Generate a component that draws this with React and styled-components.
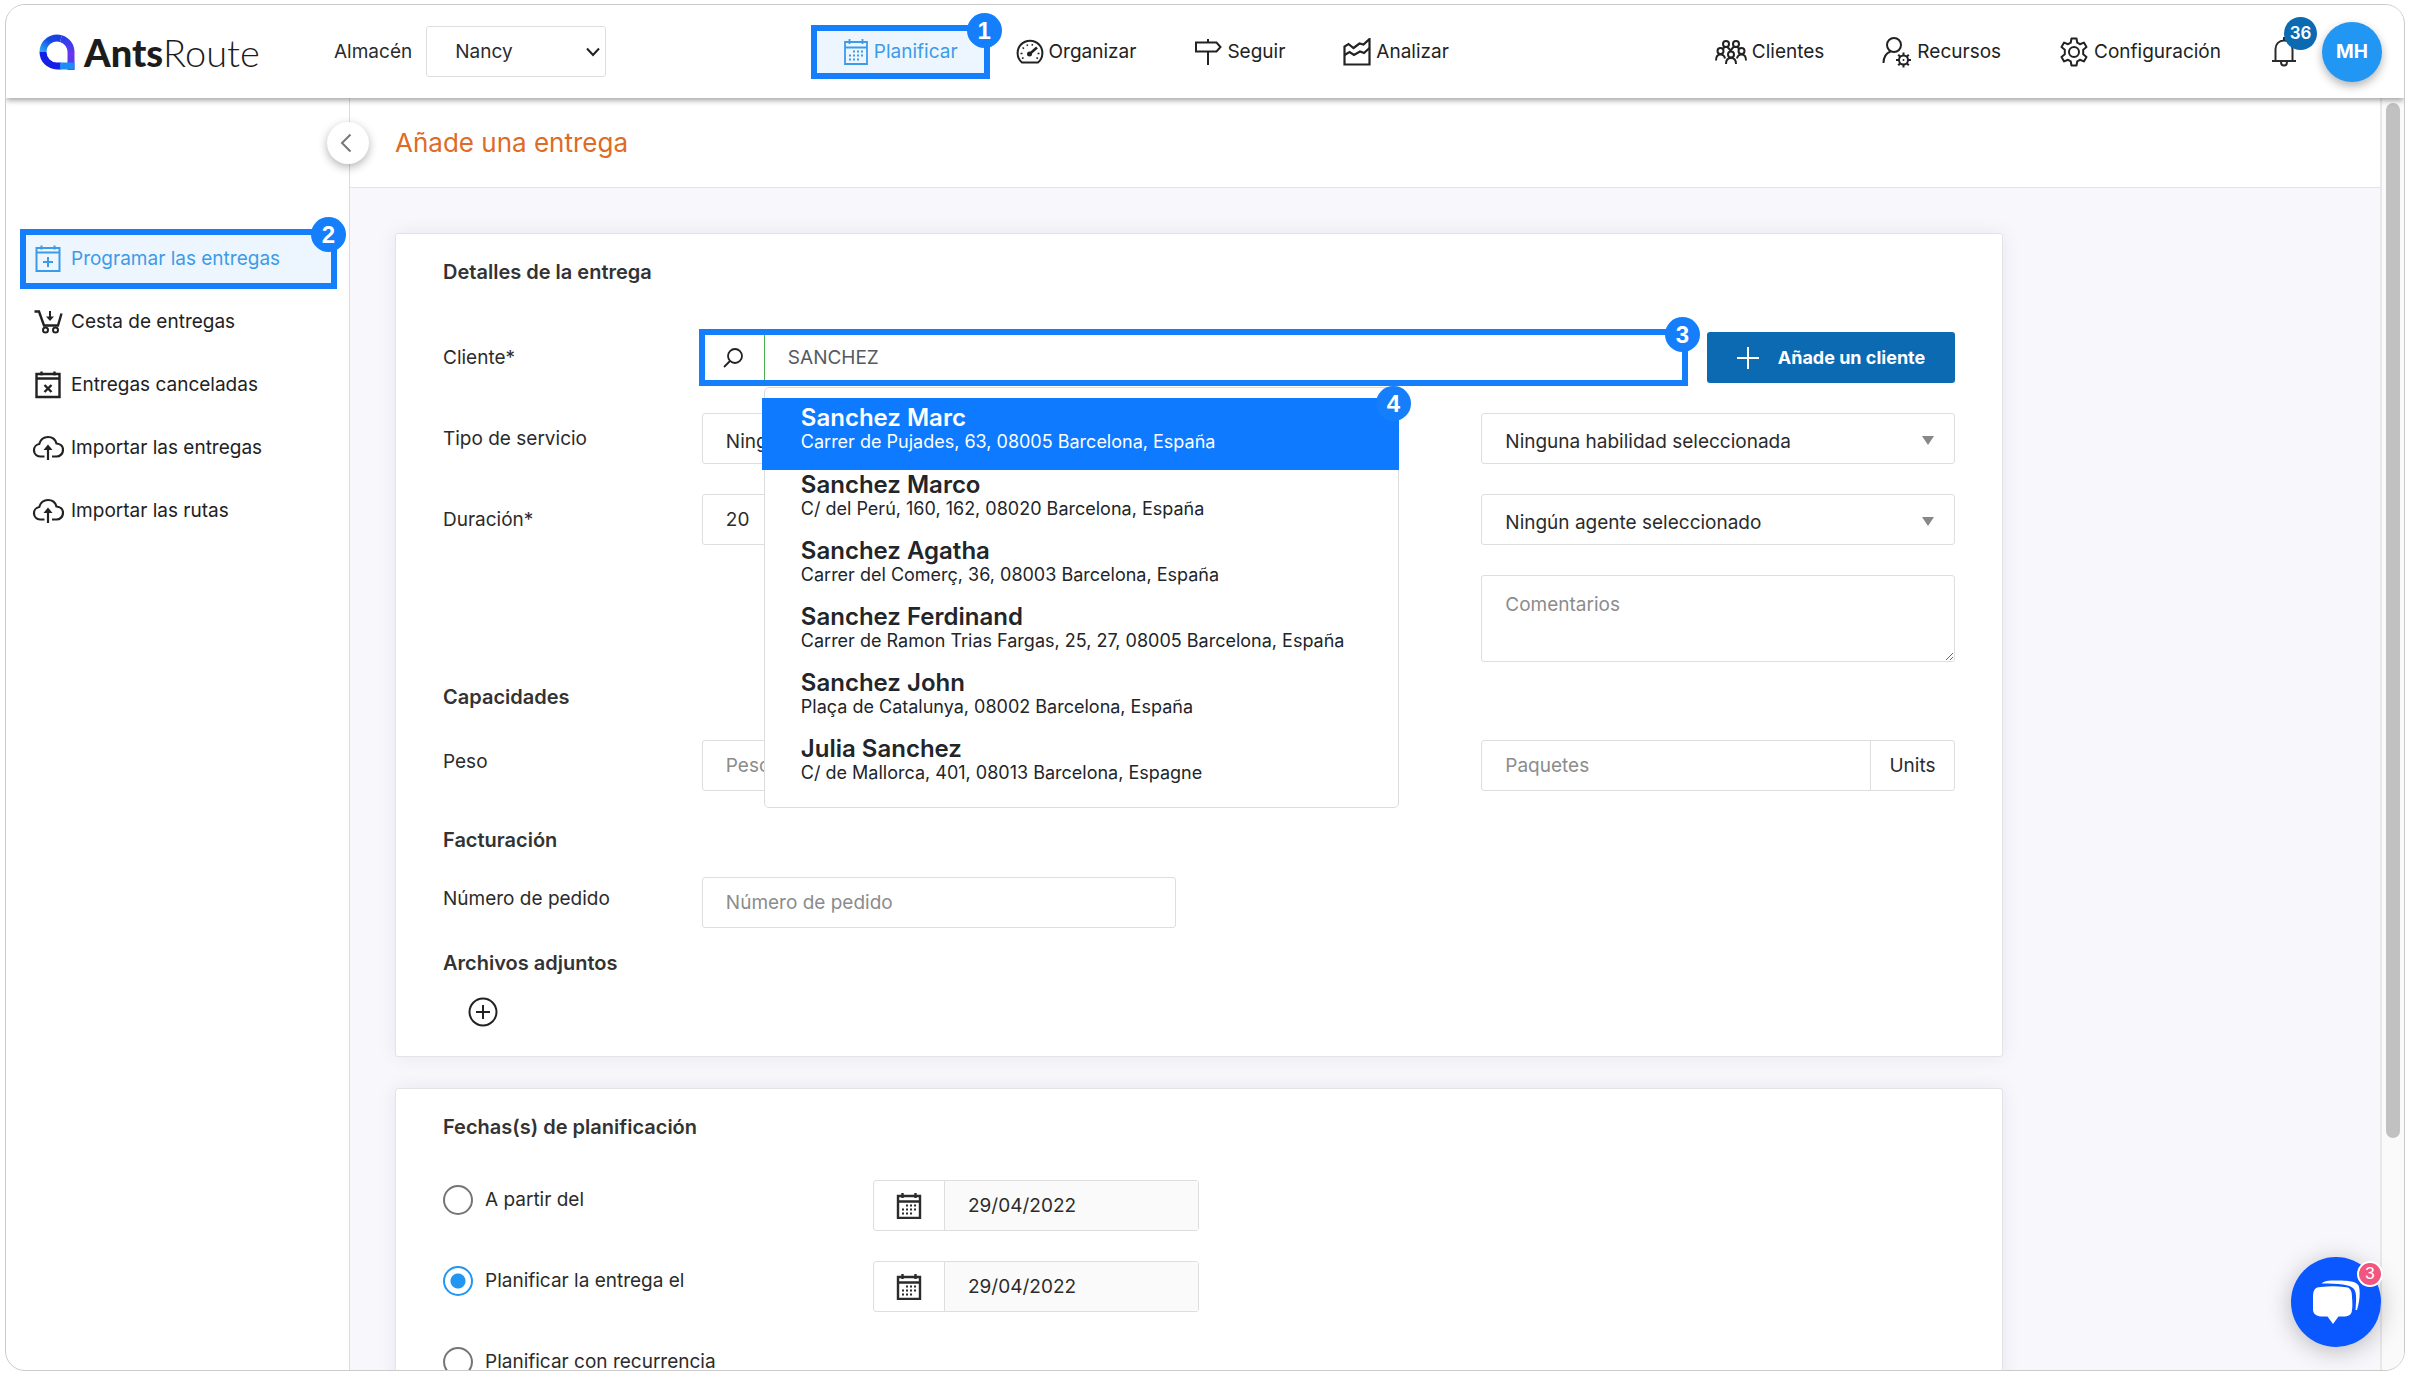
import styled, { createGlobalStyle, css } from "styled-components";

const clients = [
  { name: "Sanchez Marc", address: "Carrer de Pujades, 63, 08005 Barcelona, España" },
  { name: "Sanchez Marco", address: "C/ del Perú, 160, 162, 08020 Barcelona, España" },
  { name: "Sanchez Agatha", address: "Carrer del Comerç, 36, 08003 Barcelona, España" },
  { name: "Sanchez Ferdinand", address: "Carrer de Ramon Trias Fargas, 25, 27, 08005 Barcelona, España" },
  { name: "Sanchez John", address: "Plaça de Catalunya, 08002 Barcelona, España" },
  { name: "Julia Sanchez", address: "C/ de Mallorca, 401, 08013 Barcelona, Espagne" },
];

export default function App() {
  return (
    <>
      <GlobalStyle />
      <Frame>
        <Header>
          <Brand>
            <Logo href="#">
              <LogoMark />
              <LogoName>
                <b>Ants</b>Route
              </LogoName>
            </Logo>
            <label htmlFor="warehouse">Almacén</label>
            <Warehouse>
              <select id="warehouse" defaultValue="Nancy">
                <option>Nancy</option>
              </select>
              <ChevronIcon />
            </Warehouse>
          </Brand>
          <Nav>
            <NavLink href="#" $active>
              <CalendarIcon size={26} />
              Planificar
              <Step>1</Step>
            </NavLink>
            <NavLink href="#">
              <GaugeIcon />
              Organizar
            </NavLink>
            <NavLink href="#">
              <SignIcon />
              Seguir
            </NavLink>
            <NavLink href="#">
              <ChartIcon />
              Analizar
            </NavLink>
          </Nav>
          <Nav>
            <NavLink href="#">
              <PeopleIcon />
              Clientes
            </NavLink>
            <NavLink href="#">
              <ResourceIcon />
              Recursos
            </NavLink>
            <NavLink href="#">
              <GearIcon />
              Configuración
            </NavLink>
            <Bell aria-label="Notificaciones">
              <BellIcon />
              <BellCount>36</BellCount>
            </Bell>
            <Avatar>MH</Avatar>
          </Nav>
        </Header>

        <Body>
          <Sidebar>
            <SideLink href="#" $active>
              <CalendarMarkIcon d="M16 11.5v10M11 16.5h10" />
              Programar las entregas
              <Step>2</Step>
            </SideLink>
            <SideLink href="#">
              <CartIcon />
              Cesta de entregas
            </SideLink>
            <SideLink href="#">
              <CalendarMarkIcon dark d="M12.500 13.500l7 7M19.500 13.500l-7 7" />
              Entregas canceladas
            </SideLink>
            <SideLink href="#">
              <CloudIcon />
              Importar las entregas
            </SideLink>
            <SideLink href="#">
              <CloudIcon />
              Importar las rutas
            </SideLink>
          </Sidebar>
          <Collapse aria-label="Plegar el menú">
            <svg width="12" height="20" viewBox="0 0 12 20">
              <path d="M10.500 1.500L2 10l8.500 8.500" fill="none" stroke="#777" strokeWidth="2" />
            </svg>
          </Collapse>

          <Main>
            <TitleBar>
              <h1>Añade una entrega</h1>
            </TitleBar>
            <Cards>
              <Card>
                <Heading $after={48}>Detalles de la entrega</Heading>
                <Row>
                  <Label htmlFor="client">Cliente*</Label>
                  <ClientCell>
                    <Search>
                      <SearchIcon />
                      <input id="client" defaultValue="SANCHEZ" />
                      <Step>3</Step>
                      <Results>
                        {clients.map((client, i) => (
                          <Result key={client.name} $active={i === 0}>
                            <strong>{client.name}</strong>
                            <span>{client.address}</span>
                            {i === 0 && <Step>4</Step>}
                          </Result>
                        ))}
                      </Results>
                    </Search>
                    <AddClient>
                      <svg width="22" height="22" viewBox="0 0 22 22">
                        <path d="M11 0v22M0 11h22" stroke="#fff" strokeWidth="2" />
                      </svg>
                      Añade un cliente
                    </AddClient>
                  </ClientCell>
                </Row>
                <Row>
                  <Label htmlFor="service">Tipo de servicio</Label>
                  <Picker id="service" value="Ninguno" />
                  <Last>
                    <Picker label="Habilidad" value="Ninguna habilidad seleccionada" />
                  </Last>
                </Row>
                <Row>
                  <Label htmlFor="duration">Duración*</Label>
                  <Input id="duration" defaultValue="20" />
                  <Last>
                    <Picker label="Agente" value="Ningún agente seleccionado" />
                  </Last>
                </Row>
                <Row>
                  <Last>
                    <Comments aria-label="Comentarios" placeholder="Comentarios" />
                  </Last>
                </Row>

                <Heading $before={23} $after={31}>Capacidades</Heading>
                <Row>
                  <Label htmlFor="weight" $raised>Peso</Label>
                  <Input id="weight" placeholder="Peso" />
                  <Last>
                    <UnitField>
                      <input aria-label="Paquetes" placeholder="Paquetes" />
                      <span>Units</span>
                    </UnitField>
                  </Last>
                </Row>

                <Heading $before={37} $after={25}>Facturación</Heading>
                <Row>
                  <Label htmlFor="order" $raised>Número de pedido</Label>
                  <Input id="order" placeholder="Número de pedido" />
                </Row>

                <Heading $before={23} $after={22}>Archivos adjuntos</Heading>
                <Attach aria-label="Adjuntar un archivo">
                  <svg width="30" height="30" viewBox="0 0 30 30" fill="none" stroke="#222" strokeWidth="2">
                    <circle cx="15" cy="15" r="13.500" />
                    <path d="M15 8v14M8 15h14" />
                  </svg>
                </Attach>
              </Card>

              <Card>
                <Heading $after={41}>Fechas(s) de planificación</Heading>
                <DateRow>
                  <Choice>
                    <input type="radio" name="plan" />
                    A partir del
                  </Choice>
                  <DateField label="A partir del" />
                </DateRow>
                <DateRow>
                  <Choice>
                    <input type="radio" name="plan" defaultChecked />
                    Planificar la entrega el
                  </Choice>
                  <DateField label="Planificar la entrega el" />
                </DateRow>
                <DateRow>
                  <Choice>
                    <input type="radio" name="plan" />
                    Planificar con recurrencia
                  </Choice>
                </DateRow>
              </Card>
            </Cards>
          </Main>
          <Scrollbar>
            <div />
          </Scrollbar>
        </Body>

        <Chat aria-label="Chat">
          <ChatIcon />
          <ChatCount>3</ChatCount>
        </Chat>
      </Frame>
    </>
  );
}

function Picker({ id, label, value }) {
  return (
    <PickerBox>
      <select id={id} aria-label={label} defaultValue={value}>
        <option>{value}</option>
      </select>
      <svg width="12" height="9" viewBox="0 0 12 9">
        <path d="M0 0h12L6 9z" fill="#888" />
      </svg>
    </PickerBox>
  );
}

function DateField({ label }) {
  return (
    <DateBox>
      <span>
        <CalendarIcon size={26} bold />
      </span>
      <input aria-label={label} defaultValue="29/04/2022" />
    </DateBox>
  );
}

function LogoMark() {
  return (
    <svg width="36" height="36" viewBox="0 0 36 36" fill="none" strokeWidth="7">
      <defs>
        <linearGradient id="logoTop" x1="0" y1="1" x2="1" y2="0">
          <stop offset="0" stopColor="#2aa5f5" />
          <stop offset="0.6" stopColor="#1549e0" />
          <stop offset="1" stopColor="#1b3fe0" />
        </linearGradient>
        <linearGradient id="logoRight" x1="0" y1="0" x2="0" y2="1">
          <stop offset="0" stopColor="#2a3fe8" />
          <stop offset="0.5" stopColor="#6a35ee" />
          <stop offset="1" stopColor="#4a3cf0" />
        </linearGradient>
      </defs>
      <path d="M4 18A14 14 0 0 1 22 4.600" stroke="url(#logoTop)" />
      <path d="M22 4.600A14 14 0 0 1 32 18V36" stroke="url(#logoRight)" />
      <path d="M4 18A14 14 0 0 0 18 32H22" stroke="#1420e6" />
      <path d="M21 32H35.500" stroke="#1f8cf5" />
    </svg>
  );
}

function ChevronIcon() {
  return (
    <svg width="14" height="10" viewBox="0 0 14 10" fill="none">
      <path d="M1 1.500l6 6.500 6-6.500" stroke="#222" strokeWidth="2" />
    </svg>
  );
}

function CalendarIcon({ size, bold }) {
  return (
    <svg width={size} height={size} viewBox="0 0 26 26" fill="none" stroke="currentColor" strokeWidth={bold ? 2.4 : 1.8}>
      <path d="M2 3h22v22H2zM2 8.500h22M6.500 0v5M19.500 0v5" />
      <path d="M10 12.500h12M6 16.500h16M6 20.500h12" strokeWidth="2" strokeDasharray="2 2" />
    </svg>
  );
}

function CalendarMarkIcon({ d, dark }) {
  return (
    <svg width="32" height="30" viewBox="0 0 32 30" fill="none" stroke="currentColor" strokeWidth={dark ? 2.4 : 2}>
      <path d="M4.500 4h23v23h-23zM4.500 8.500h23M9.500 1.500v4M22.500 1.500v4" />
      <g transform="translate(0 1.500)">
        <path d={d} />
      </g>
    </svg>
  );
}

function GaugeIcon() {
  return (
    <svg width="28" height="26" viewBox="0 0 28 26" fill="none" stroke="currentColor" strokeWidth="2">
      <path d="M6 23.500A12.400 12.400 0 1 1 22 23.500z" strokeLinejoin="round" />
      <path d="M13 15.500l8-7" strokeWidth="2.500" />
      <circle cx="13.500" cy="15" r="1.500" fill="currentColor" />
      <path d="M4.500 14.500h2M6.500 8.500l1.500 1.200M11 5.500l.6 1.600M16.500 5l-.4 1.700M23.500 14.500h-2M6 19.500l1.600-.8M22 19.500l-1.600-.8" strokeWidth="1.500" />
    </svg>
  );
}

function SignIcon() {
  return (
    <svg width="28" height="26" viewBox="0 0 28 26" fill="none" stroke="currentColor" strokeWidth="2">
      <path d="M2 3.500h20.500l4 4.500-4 4.500H2zM14 0v3.500M14 12.500V26" />
    </svg>
  );
}

function ChartIcon() {
  return (
    <svg width="28" height="28" viewBox="0 0 28 28" fill="none" stroke="currentColor" strokeWidth="2.200">
      <path d="M1.500 26.500v-18L5.500 6l5 4 6-4.500 4 1 6-5.500v25.500z" />
      <path d="M1.500 17l5-3 4.500 3 6-3.500 4 1.500 5.500-5" />
    </svg>
  );
}

function PeopleIcon() {
  return (
    <svg width="32" height="26" viewBox="0 0 32 26" fill="none" stroke="currentColor" strokeWidth="2">
      <circle cx="11" cy="5" r="3" />
      <circle cx="21" cy="5" r="3" />
      <circle cx="5.500" cy="12" r="3" />
      <circle cx="26.500" cy="12" r="3" />
      <circle cx="16" cy="15.500" r="3" />
      <path d="M1 21.500c0-4 1.500-6 4.500-6 2.500 0 4 1.500 4.500 4M31 21.500c0-4-1.500-6-4.500-6-2.500 0-4 1.500-4.500 4M11 25c0-4 2-6 5-6s5 2 5 6M8 9.500l2-1.500h2.500l3 3.500 3-3.500H22l2 1.500" />
    </svg>
  );
}

function ResourceIcon() {
  return (
    <svg width="30" height="32" viewBox="0 0 30 32" fill="none" stroke="currentColor" strokeWidth="2">
      <circle cx="12" cy="9" r="7" />
      <path d="M1.500 27c0-6 2-9.500 7-11.500" />
      <circle cx="21.500" cy="24" r="4.500" />
      <circle cx="21.500" cy="24" r="1" fill="currentColor" strokeWidth="0" />
      <path d="M21.500 16.500v3M21.500 28.500v3M14 24h3M26 24h3M16.200 18.700l2.100 2.100M24.700 27.200l2.100 2.100M26.800 18.700l-2.100 2.100M18.300 27.200l-2.100 2.100" />
    </svg>
  );
}

function GearIcon() {
  return (
    <svg width="30" height="30" viewBox="0 0 30 30" fill="none" stroke="currentColor" strokeWidth="2" strokeLinejoin="round">
      <circle cx="15" cy="15" r="5" />
      <path d="M12.500 1.500h5l.8 4.200 2.600 1.500 4-1.600 2.600 4.400-3.300 2.700v4.600l3.300 2.700-2.600 4.400-4-1.600-2.600 1.500-.8 4.200h-5l-.8-4.200-2.600-1.500-4 1.600L2.500 20l3.300-2.700v-4.600L2.500 10l2.600-4.400 4 1.600 2.600-1.500z" />
    </svg>
  );
}

function BellIcon() {
  return (
    <svg width="24" height="30" viewBox="0 0 24 30" fill="none" stroke="currentColor" strokeWidth="2">
      <path d="M0 24h24M3.500 24V12c0-5 3.500-8.500 8.500-8.500s8.500 3.500 8.500 8.500v12M12 0v3.500M9 25c0 2.500 1 3.500 3 3.500s3-1 3-3.500" />
    </svg>
  );
}

function CartIcon() {
  return (
    <svg width="32" height="26" viewBox="0 0 32 26" fill="none" stroke="currentColor" strokeWidth="2">
      <path d="M2.500 2.500H7l5 14h14L29.500 4.500" strokeWidth="2.400" />
      <path d="M18 2v8" />
      <path d="M14 7.500h8L18 12z" fill="currentColor" strokeWidth="0" />
      <circle cx="13.500" cy="21" r="2.500" />
      <circle cx="23.500" cy="21" r="2.500" />
    </svg>
  );
}

function CloudIcon() {
  return (
    <svg width="32" height="26" viewBox="0 0 32 26" fill="none" stroke="currentColor" strokeWidth="2.200">
      <path d="M12.500 21.500H8a6.300 6.300 0 0 1-.8-12.500C8.500 4.500 11.800 2 16 2c4.500 0 7.500 2.700 8.500 6.500 3.700.2 6.500 2.700 6.500 6.300 0 4-3 6.700-6.500 6.700H20" />
      <path d="M16 25V12" />
      <path d="M11.500 15L16 9.500l4.500 5.500z" fill="currentColor" strokeWidth="0" />
    </svg>
  );
}

function SearchIcon() {
  return (
    <svg width="20" height="20" viewBox="0 0 20 20" fill="none" stroke="#222" strokeWidth="1.800">
      <circle cx="12" cy="8" r="7" />
      <path d="M7 13l-6 6" />
    </svg>
  );
}

function ChatIcon() {
  return (
    <svg width="48" height="46" viewBox="0 0 48 46" fill="#fff">
      <path d="M1 18C1 11 3 8 9 8c8-1 16-1 23 0 6 0 8 3 8 10 .5 6 .5 10 0 13-.5 4-2 6-7 6.500h-6.500L21 45l-5.500-7.500H9C4 37 1.500 35 1 31z" />
      <path d="M9.500 4.500C12 2 16 1.500 24 1.500c17 0 20 1.500 22.500 5 2 4 1.500 15-1.500 24.500h-1.500c1-13 1-18-2-21.500C38 5.500 27 4.500 9.500 4.500z" />
    </svg>
  );
}

const GlobalStyle = createGlobalStyle`
  *,
  *::before,
  *::after {
    box-sizing: border-box;
  }

  body {
    margin: 0;
    background-color: #ffffff;
  }

  body,
  button,
  input,
  select,
  textarea {
    font-family: Inter, "Open Sans", sans-serif;
    font-size: 19px;
    line-height: 24px;
    color: #2b2b2b;
  }

  a {
    color: inherit;
    text-decoration: none;
  }

  svg {
    flex-shrink: 0;
  }
`;

const marker = css`
  &::after {
    content: "";
    position: absolute;
    inset: -3px;
    border: 6px solid #147efb;
    pointer-events: none;
  }
`;

const box = css`
  width: 100%;
  height: 51px;
  background-color: #ffffff;
  border: 1px solid #dedee0;
  border-radius: 3px;
`;

const Step = styled.span`
  position: absolute;
  z-index: 2;
  top: -15px;
  right: -15px;
  width: 35px;
  height: 35px;
  border-radius: 50%;
  background-color: #147efb;
  color: #ffffff;
  font-family: "Liberation Sans", Arial, sans-serif;
  font-size: 24px;
  font-weight: 700;
  line-height: 35px;
  text-align: center;
`;

const Frame = styled.div`
  position: relative;
  display: flex;
  flex-direction: column;
  height: calc(100vh - 7px);
  margin: 4px 4px 3px 5px;
  border: 1px solid #cbcbcb;
  border-radius: 20px;
  background-color: #ffffff;
  overflow: hidden;
`;

const Header = styled.header`
  position: relative;
  z-index: 3;
  flex: none;
  display: grid;
  grid-template-columns: 34% 1fr auto;
  align-items: center;
  height: 93px;
  padding-right: 22px;
  background-color: #ffffff;
  box-shadow: 0 2px 6px rgba(0, 0, 0, 0.4);
`;

const Brand = styled.div`
  display: flex;
  align-items: center;
  padding-left: 33px;
`;

const Logo = styled.a`
  display: flex;
  align-items: center;
  gap: 9px;
  width: 295px;
`;

const LogoName = styled.span`
  font-family: Lato, sans-serif;
  font-size: 38px;
  font-weight: 300;
  line-height: 46px;
  color: #1c1c1c;

  b {
    font-weight: 900;
  }
`;

const Warehouse = styled.div`
  position: relative;
  margin-left: 14px;

  select {
    ${box}
    width: 180px;
    padding: 0 28px;
    appearance: none;
  }

  svg {
    position: absolute;
    top: 21px;
    right: 6px;
    pointer-events: none;
  }
`;

const Nav = styled.nav`
  display: flex;
  align-items: center;
`;

const NavLink = styled.a`
  position: relative;
  display: flex;
  align-items: center;
  gap: 5px;
  height: 48px;
  padding: 0 29px;
  color: #222222;

  ${(props) =>
    props.$active &&
    css`
      color: #3c9be8;
      background-color: #edf6fe;
      ${marker}
    `}
`;

const Bell = styled.button`
  position: relative;
  display: flex;
  margin: 0 26px 0 22px;
  padding: 0;
  border: none;
  background: none;
`;

const BellCount = styled.span`
  position: absolute;
  top: -20px;
  left: 12px;
  width: 33px;
  height: 33px;
  border-radius: 50%;
  background-color: #0c6ab3;
  color: #ffffff;
  font-size: 17px;
  font-weight: 600;
  line-height: 33px;
  text-align: center;
`;

const Avatar = styled.button`
  width: 60px;
  height: 60px;
  padding: 0;
  border: none;
  border-radius: 50%;
  background-color: #2196f3;
  box-shadow: 0 4px 10px rgba(0, 0, 0, 0.3);
  color: #ffffff;
  font-weight: 700;
`;

const Body = styled.div`
  position: relative;
  flex: 1;
  display: flex;
  min-height: 0;
`;

const Sidebar = styled.aside`
  flex: none;
  display: flex;
  flex-direction: column;
  gap: 9px;
  width: 344px;
  padding: 134px 15px 0 17px;
  border-right: 1px solid #dcdcdf;
`;

const SideLink = styled.a`
  position: relative;
  display: flex;
  align-items: center;
  gap: 7px;
  height: 54px;
  padding-left: 9px;
  color: #222222;

  ${(props) =>
    props.$active &&
    css`
      color: #3c9be8;
      background-color: #edf6fe;
      ${marker}
    `}

  ${Step} {
    right: -12px;
  }
`;

const Collapse = styled.button`
  position: absolute;
  z-index: 2;
  top: 24px;
  left: 321px;
  display: flex;
  align-items: center;
  justify-content: center;
  width: 42px;
  height: 42px;
  padding: 0 4px 0 0;
  border: none;
  border-radius: 50%;
  background-color: #ffffff;
  box-shadow: 0 3px 10px rgba(0, 0, 0, 0.3);
`;

const Main = styled.main`
  flex: 1;
  min-width: 0;
  background-color: #f7f7fc;
  overflow: hidden;
`;

const TitleBar = styled.div`
  display: flex;
  align-items: center;
  height: 90px;
  padding-left: 45px;
  background-color: #ffffff;
  border-bottom: 1px solid #e4e4e6;

  h1 {
    margin: 0;
    font-size: 26px;
    font-weight: 400;
    line-height: 32px;
    color: #de6b26;
  }
`;

const Cards = styled.div`
  display: flex;
  flex-direction: column;
  gap: 31px;
  max-width: 1698px;
  padding: 45px;
`;

const Card = styled.section`
  padding: 26px 47px 29px;
  border: 1px solid #e3e3e6;
  border-radius: 3px;
  background-color: #ffffff;
  box-shadow: 0 0 20px rgba(30, 30, 60, 0.07);
`;

const Heading = styled.h2`
  margin: ${(props) => props.$before || 0}px 0 ${(props) => props.$after}px;
  font-size: 20px;
  font-weight: 600;
  line-height: 24px;
  color: #333333;
`;

const Row = styled.div`
  display: grid;
  grid-template-columns: 259fr 474fr 306fr 474fr;

  & + & {
    margin-top: 30px;
  }
`;

const Label = styled.label`
  line-height: ${(props) => (props.$raised ? 44 : 51)}px;
`;

const Last = styled.div`
  grid-column: 4;
`;

const ClientCell = styled.div`
  grid-column: 2 / 5;
  display: flex;
  gap: 22px;
`;

const Search = styled.div`
  position: relative;
  flex: 1;
  display: flex;
  align-items: center;
  height: 51px;
  ${marker}

  > svg {
    margin: 0 21px;
  }

  > input {
    flex: 1;
    height: 51px;
    padding: 0 23px;
    border: none;
    border-left: 1px solid #4caf50;
    outline: none;
    background: none;
    color: #555a60;
  }
`;

const AddClient = styled.button`
  display: flex;
  align-items: center;
  justify-content: center;
  gap: 19px;
  width: 248px;
  height: 51px;
  border: none;
  border-radius: 3px;
  background-color: #0c6ab3;
  color: #ffffff;
  font-size: 18px;
  font-weight: 700;
`;

const Results = styled.ul`
  position: absolute;
  z-index: 1;
  top: 55px;
  left: 62px;
  width: 635px;
  margin: 0;
  padding: 10px 0 7px;
  border: 1px solid #dcdcdf;
  border-radius: 5px;
  background-color: #ffffff;
  list-style: none;
`;

const Result = styled.li`
  position: relative;
  display: flex;
  flex-direction: column;
  padding: 1px 0 17px 36px;
  color: #222529;

  strong {
    font-size: 24px;
    font-weight: 600;
    line-height: 28px;
  }

  span {
    font-size: 18px;
    line-height: 20px;
  }

  ${(props) =>
    props.$active &&
    css`
      margin: 0 -1px 0 -3px;
      padding: 6px 0 18px 39px;
      background-color: #0d7aff;
      color: #ffffff;
    `}

  ${Step} {
    top: -12px;
    right: -12px;
    font-size: 24px;
    line-height: 35px;
  }
`;

const PickerBox = styled.div`
  position: relative;

  select {
    ${box}
    padding: 6px 40px 0 23px;
    appearance: none;
  }

  svg {
    position: absolute;
    top: 23px;
    right: 21px;
    pointer-events: none;
  }
`;

const Input = styled.input`
  ${box}
  padding: 0 23px;

  &::placeholder {
    color: #8c8c8c;
  }
`;

const Comments = styled.textarea`
  ${box}
  display: block;
  height: 87px;
  padding: 17px 23px;

  &::placeholder {
    color: #8c8c8c;
  }
`;

const UnitField = styled.div`
  ${box}
  display: flex;

  input {
    flex: 1;
    min-width: 0;
    padding: 0 23px;
    border: none;
    background: none;
  }

  input::placeholder {
    color: #8c8c8c;
  }

  span {
    width: 84px;
    border-left: 1px solid #dedee0;
    line-height: 49px;
    text-align: center;
  }
`;

const Attach = styled.button`
  display: block;
  margin-left: 25px;
  padding: 0;
  border: none;
  background: none;

  svg {
    display: block;
  }
`;

const DateRow = styled.div`
  display: grid;
  grid-template-columns: 430px 326px;
  height: 51px;
  margin-bottom: 30px;
`;

const Choice = styled.label`
  display: flex;
  align-items: center;
  gap: 12px;
  height: 40px;

  input {
    appearance: none;
    width: 30px;
    height: 30px;
    margin: 0;
    border: 2px solid #757575;
    border-radius: 50%;
  }

  input:checked {
    border-color: #2196f3;
    background: radial-gradient(circle, #2196f3 7px, #ffffff 8px);
  }
`;

const DateBox = styled.div`
  ${box}
  display: flex;
  color: #2b2b2b;

  span {
    display: flex;
    align-items: center;
    justify-content: center;
    width: 70px;
  }

  input {
    flex: 1;
    min-width: 0;
    padding: 0 23px;
    border: none;
    border-left: 1px solid #dedee0;
    background-color: #fafafa;
  }
`;

const Scrollbar = styled.div`
  flex: none;
  width: 24px;
  padding: 5px 4px;
  border-left: 2px solid #e8e8e8;
  background-color: #fafafa;

  div {
    width: 14px;
    height: 82%;
    border-radius: 7px;
    background-color: #c1c1c1;
  }
`;

const Chat = styled.button`
  position: absolute;
  z-index: 4;
  right: 23px;
  bottom: 23px;
  display: flex;
  align-items: center;
  justify-content: center;
  width: 90px;
  height: 90px;
  padding: 0;
  border: none;
  border-radius: 50%;
  background-color: #0b57ff;
  box-shadow: 0 4px 24px rgba(0, 0, 0, 0.25);
`;

const ChatCount = styled.span`
  position: absolute;
  top: 4px;
  right: -2px;
  width: 26px;
  height: 26px;
  border: 2px solid #ffffff;
  border-radius: 50%;
  background-color: #f0567e;
  color: #ffffff;
  font-family: "Liberation Sans", Arial, sans-serif;
  font-size: 17px;
  line-height: 22px;
  text-align: center;
`;
